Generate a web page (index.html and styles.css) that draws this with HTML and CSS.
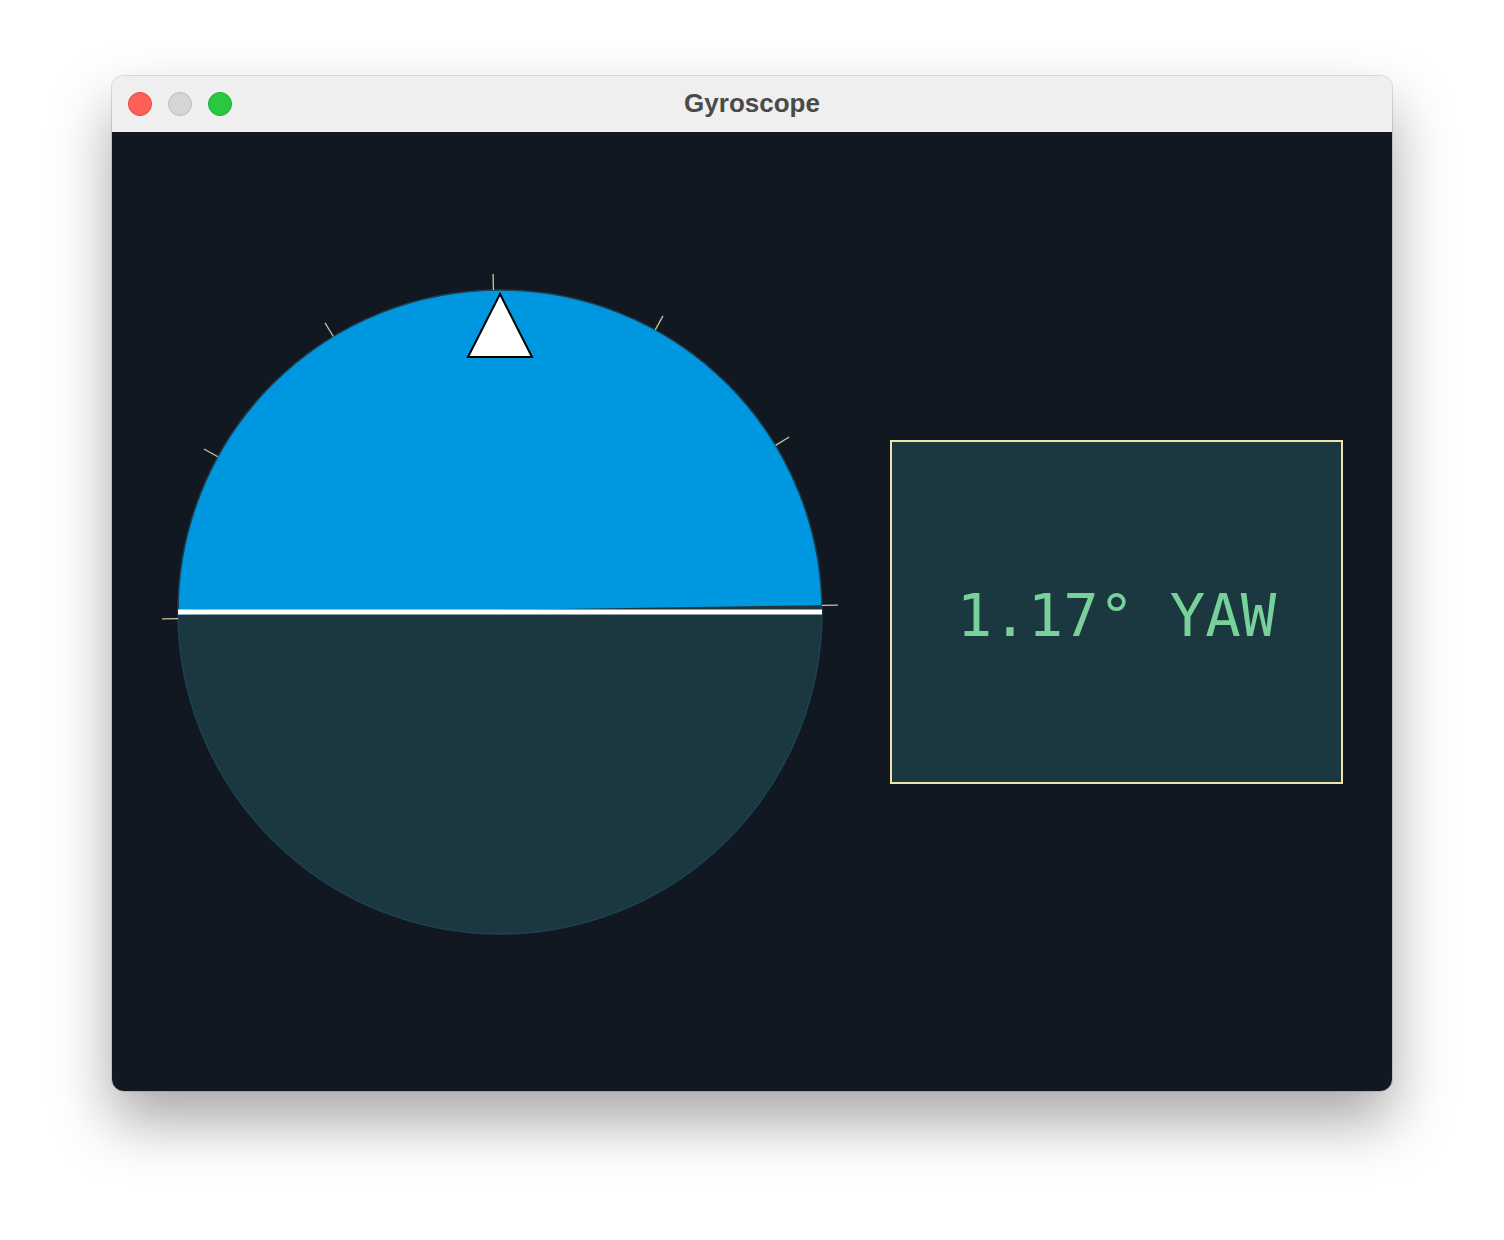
FILE: index.html
```html
<!DOCTYPE html>
<html>
<head>
<meta charset="utf-8">
<title>Gyroscope</title>
<link rel="stylesheet" href="styles.css">
</head>
<body>
<div class="window">
  <div class="titlebar">
    <div class="lights">
      <span class="light red"></span>
      <span class="light gray"></span>
      <span class="light green"></span>
    </div>
    <div class="title">Gyroscope</div>
  </div>
  <div class="content">
    <svg class="gauge" width="680" height="680" viewBox="0 0 680 680">
      <defs>
        <clipPath id="disc"><circle cx="340" cy="340" r="322"/></clipPath>
      </defs>
      <circle cx="340" cy="340" r="322" fill="#0097e1"/>
      <g clip-path="url(#disc)">
        <polygon points="0,342.8 680,333 680,680 0,680" fill="#1b3841"/>
      </g>
      <circle cx="340" cy="340" r="322" fill="none" stroke="#1d4150" stroke-width="1.5"/>
      <g transform="rotate(-1.17 340 340)" stroke="#c9c49c" stroke-width="1.3">
        <line x1="340" y1="18" x2="340" y2="2"/>
        <line x1="340" y1="18" x2="340" y2="2" transform="rotate(30 340 340)"/>
        <line x1="340" y1="18" x2="340" y2="2" transform="rotate(60 340 340)"/>
        <line x1="340" y1="18" x2="340" y2="2" transform="rotate(90 340 340)"/>
        <line x1="340" y1="18" x2="340" y2="2" transform="rotate(-30 340 340)"/>
        <line x1="340" y1="18" x2="340" y2="2" transform="rotate(-60 340 340)"/>
        <line x1="340" y1="18" x2="340" y2="2" transform="rotate(-90 340 340)"/>
      </g>
      <rect x="18" y="337.5" width="644" height="5" fill="#ffffff"/>
      <polygon points="340,22 372,85 308,85" fill="#ffffff" stroke="#000000" stroke-width="2" stroke-linejoin="miter"/>
    </svg>
    <div class="readout">1.17° YAW</div>
  </div>
</div>
</body>
</html>
```
FILE: styles.css
```css
html, body {
  margin: 0;
  padding: 0;
  background: #ffffff;
}
body {
  width: 1504px;
  height: 1240px;
  overflow: hidden;
}
.window {
  margin: 76px 0 0 112px;
  width: 1280px;
  height: 1015px;
  border-radius: 12px;
  overflow: hidden;
  box-shadow: 0 30px 60px rgba(0,0,0,0.35), 0 0 0 1px rgba(0,0,0,0.12);
  display: flex;
  flex-direction: column;
}
.titlebar {
  height: 56px;
  background: #efefef;
  display: flex;
  align-items: center;
  position: relative;
  flex: none;
}
.lights {
  display: flex;
  gap: 16px;
  padding-left: 16px;
}
.light {
  width: 24px;
  height: 24px;
  border-radius: 50%;
  box-sizing: border-box;
}
.red { background: #fe5f57; border: 1px solid #e2463f; }
.gray { background: #d5d5d5; border: 1px solid #bdbdbd; }
.green { background: #28c840; border: 1px solid #1eaa32; }
.title {
  position: absolute;
  left: 0;
  right: 0;
  top: 0;
  bottom: 0;
  display: flex;
  align-items: center;
  justify-content: center;
  font-family: "Liberation Sans", Arial, sans-serif;
  font-weight: bold;
  font-size: 26px;
  color: #4a4a4a;
  padding-bottom: 1px;
}
.content {
  flex: 1;
  background: #111822;
  display: flex;
  align-items: center;
  padding-left: 48px;
  gap: 50px;
}
.gauge {
  display: block;
  flex: none;
}
.readout {
  width: 453px;
  height: 344px;
  box-sizing: border-box;
  border: 2px solid #efe5ac;
  background: #1b3841;
  display: flex;
  align-items: center;
  justify-content: center;
  font-family: "DejaVu Sans Mono", "Liberation Mono", monospace;
  font-size: 59px;
  color: #77d198;
  padding-top: 8px;
}
```
